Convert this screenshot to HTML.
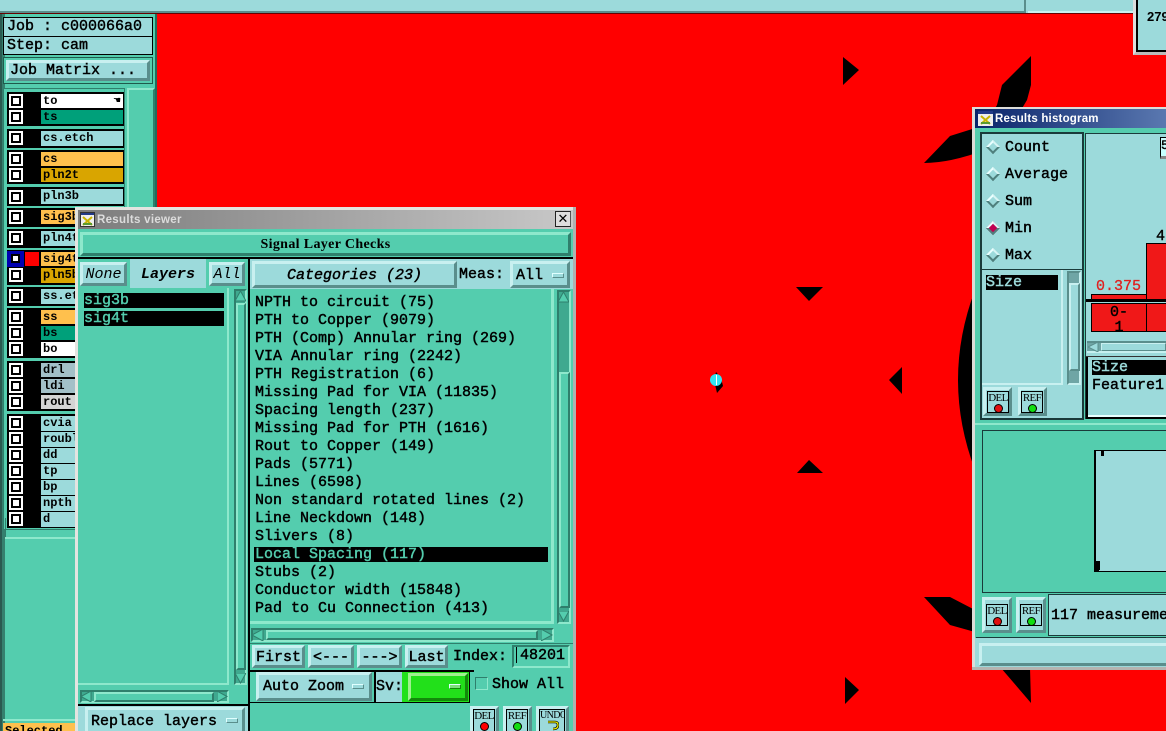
<!DOCTYPE html>
<html><head><meta charset="utf-8"><style>
html,body{margin:0;padding:0;width:1166px;height:731px;overflow:hidden;background:#f00}
#r{position:relative;width:1166px;height:731px;overflow:hidden;font:15px/18px "Liberation Mono",monospace;-webkit-text-stroke:.45px #000;color:#000}
#r div{position:absolute;box-sizing:border-box;white-space:pre}
.l{background:#9cdadb}.g{background:#54cdae}.k{background:#000}
.b{background:#9cdadb;border:3px solid;border-color:#c8f0f0 #5a8e8c #5a8e8c #c8f0f0}
.bg{background:#54cdae;border:3px solid;border-color:#8ee8cc #2f7f6c #2f7f6c #8ee8cc}
.s{background:#3fa98f;border:2px solid;border-color:#2f7f6c #8ee8cc #8ee8cc #2f7f6c}
.th{background:#54cdae;border:2px solid;border-color:#8ee8cc #2f7f6c #2f7f6c #8ee8cc}
.r{font-size:12px;font-weight:bold;-webkit-text-stroke:0;line-height:15px;padding-left:2px;overflow:hidden}
.c{width:14px;height:14px;background:#fff;left:9px}
.c:after{content:"";position:absolute;left:2px;top:2px;width:10px;height:10px;box-sizing:border-box;border:2px solid #000;background:#fff}
.d{width:10px;height:10px;transform:rotate(45deg);background:#9cdadb;border:2px solid;border-color:#d8f4f4 #4f7f7d #4f7f7d #eaffff;left:988px}
.i{background:#9cdadb;border:1px solid #000;font:11px/12px "Liberation Serif",serif;-webkit-text-stroke:0;text-align:center;letter-spacing:-.6px;overflow:hidden}
.i span{display:block;width:9px;height:9px;border-radius:50%;margin:0 auto;border:1px solid #000;box-sizing:border-box}
.n{-webkit-text-stroke:0}
.w{color:#54cdae;-webkit-text-stroke:.45px #54cdae}
.x{color:#9cdadb;-webkit-text-stroke:.45px #9cdadb}
</style></head><body><div id="r">

<!-- top strip -->
<div class="l" style="left:0;top:0;width:1166px;height:14px"></div>
<div style="left:0;top:11px;width:1026px;height:2px;background:#5a8e8c"></div>
<div style="left:1024px;top:0;width:2px;height:13px;background:#5a8e8c"></div>
<div style="left:1028px;top:11px;width:110px;height:2px;background:#c8f0f0"></div>
<div style="left:0;top:13px;width:1166px;height:1px;background:#600"></div>
<div class="l" style="left:1133px;top:0;width:33px;height:55px;border-left:3px solid #ddd;border-bottom:3px solid #bbb"></div>
<div class="k" style="left:1136px;top:0;width:30px;height:52px"></div>
<div class="l" style="left:1138px;top:0;width:28px;height:50px"></div>
<div class="n" style="left:1147px;top:8px;font:bold 13px/18px 'Liberation Sans',sans-serif">279</div>

<!-- black artwork -->
<svg style="position:absolute;left:0;top:0" width="1166" height="731" viewBox="0 0 1166 731">
<path d="M843 57L859 70L843 85ZM845 677L859 690L845 704ZM796 287H823L809 301ZM889 380L902 367V394ZM797 473L809 460L823 473Z" fill="#000"/>
<path d="M1031 56L1002 85L997 105L985 125L950 136L924 163Q950 163 985 150L1015 120L1027 100L1031 85Z" fill="#000"/>
<path d="M975 290Q941 380 975 470Z" fill="#000"/>
<path d="M924 597L950 597L975 610V632L950 625ZM1001 668L1030 668L1031 703Z" fill="#000"/>
<path d="M716 372L721 378L723 386L717 393L714 380Z" fill="#000"/>
<circle cx="716" cy="380" r="6" fill="#2fe6f0"/>
<rect x="716" y="375" width="1" height="10" fill="#fff"/>
</svg>

<!-- left panel -->
<div class="g" style="left:0;top:14px;width:157px;height:717px"></div>
<div style="left:0;top:14px;width:2px;height:717px;background:#2a5a50"></div>
<div style="left:2px;top:14px;width:3px;height:717px;background:#35806e"></div>
<div style="left:155px;top:14px;width:2px;height:717px;background:#1f6e5c"></div>
<div class="l" style="left:3px;top:17px;width:150px;height:20px;border:1px solid #000;padding:0 0 0 3px">Job : c000066a0</div>
<div class="l" style="left:3px;top:36px;width:150px;height:19px;border:1px solid #000;padding:0 0 0 3px;line-height:17px">Step: cam</div>
<div class="g" style="left:3px;top:57px;width:150px;height:27px;border:1px solid #1f5a4c"></div>
<div class="b" style="left:6px;top:60px;width:144px;height:21px;padding:0 0 0 1px;line-height:16px;background:#9cdadb">Job Matrix ...</div>
<div style="left:3px;top:88px;width:122px;height:442px;background:#54cdae;border:1px solid #2f7f6c"></div>
<div class="g" style="left:127px;top:88px;width:28px;height:449px;border-left:2px solid #8ee8cc;border-top:2px solid #8ee8cc;border-right:2px solid #2f7f6c"></div>
<div style="left:5px;top:537px;width:150px;height:2px;background:#8ee8cc"></div>
<div style="left:5px;top:518px;width:1px;height:19px;background:#2f7f6c"></div>

<!-- layer groups -->
<div class="k" style="left:7px;top:92px;width:117px;height:34px"></div>
<div class="k" style="left:7px;top:129px;width:117px;height:19px"></div>
<div class="k" style="left:7px;top:150px;width:117px;height:34px"></div>
<div class="k" style="left:7px;top:187px;width:117px;height:19px"></div>
<div class="k" style="left:7px;top:208px;width:117px;height:19px"></div>
<div class="k" style="left:7px;top:229px;width:117px;height:19px"></div>
<div class="k" style="left:7px;top:250px;width:117px;height:35px"></div>
<div class="k" style="left:7px;top:287px;width:117px;height:19px"></div>
<div class="k" style="left:7px;top:308px;width:117px;height:50px"></div>
<div class="k" style="left:7px;top:361px;width:117px;height:50px"></div>
<div class="k" style="left:7px;top:414px;width:117px;height:114px"></div>

<div class="c" style="top:94px"></div><div class="r" style="left:41px;top:94px;width:82px;height:14px;background:#fff">to</div>
<div class="n" style="left:113px;top:97px;font:9px/9px 'DejaVu Sans',sans-serif">&#9754;</div>
<div class="c" style="top:110px"></div><div class="r" style="left:41px;top:110px;width:82px;height:14px;background:#00a07a">ts</div>
<div class="c" style="top:131px"></div><div class="r l" style="left:41px;top:131px;width:82px;height:15px">cs.etch</div>
<div class="c" style="top:152px"></div><div class="r" style="left:41px;top:152px;width:82px;height:14px;background:#ffc04d">cs</div>
<div class="c" style="top:168px"></div><div class="r" style="left:41px;top:168px;width:82px;height:14px;background:#d9a500">pln2t</div>
<div class="c" style="top:190px"></div><div class="r l" style="left:41px;top:189px;width:82px;height:15px">pln3b</div>
<div class="c" style="top:210px"></div><div class="r" style="left:41px;top:210px;width:82px;height:14px;background:#ffc04d">sig3b</div>
<div class="c" style="top:231px"></div><div class="r l" style="left:41px;top:231px;width:82px;height:15px">pln4t</div>
<div style="left:7px;top:251px;width:17px;height:16px;background:#0000b0"></div>
<div style="left:11px;top:254px;width:9px;height:9px;background:#fff;border:2px solid #000"></div>
<div style="left:25px;top:252px;width:14px;height:14px;background:#f00"></div>
<div class="r" style="left:41px;top:252px;width:82px;height:14px;background:#ffc04d">sig4t</div>
<div class="c" style="top:268px"></div><div class="r" style="left:41px;top:268px;width:82px;height:15px;background:#d9a500">pln5b</div>
<div class="c" style="top:289px"></div><div class="r l" style="left:41px;top:289px;width:82px;height:15px">ss.etch</div>
<div class="c" style="top:310px"></div><div class="r" style="left:41px;top:310px;width:82px;height:14px;background:#ffc04d">ss</div>
<div class="c" style="top:326px"></div><div class="r" style="left:41px;top:326px;width:82px;height:14px;background:#00a07a">bs</div>
<div class="c" style="top:342px"></div><div class="r" style="left:41px;top:342px;width:82px;height:14px;background:#fff">bo</div>
<div class="c" style="top:363px"></div><div class="r" style="left:41px;top:363px;width:82px;height:14px;background:#a3c0c8">drl</div>
<div class="c" style="top:379px"></div><div class="r" style="left:41px;top:379px;width:82px;height:14px;background:#a3c0c8">ldi</div>
<div class="c" style="top:395px"></div><div class="r" style="left:41px;top:395px;width:82px;height:14px;background:#d4d4d4">rout</div>
<div class="c" style="top:416px"></div><div class="r l" style="left:41px;top:416px;width:82px;height:15px">cvia</div>
<div class="c" style="top:432px"></div><div class="r l" style="left:41px;top:432px;width:82px;height:15px">roubl</div>
<div class="c" style="top:448px"></div><div class="r l" style="left:41px;top:448px;width:82px;height:15px">dd</div>
<div class="c" style="top:464px"></div><div class="r l" style="left:41px;top:464px;width:82px;height:15px">tp</div>
<div class="c" style="top:480px"></div><div class="r l" style="left:41px;top:480px;width:82px;height:15px">bp</div>
<div class="c" style="top:496px"></div><div class="r l" style="left:41px;top:496px;width:82px;height:15px">npth</div>
<div class="c" style="top:512px"></div><div class="r l" style="left:41px;top:512px;width:82px;height:15px">d</div>

<div style="left:3px;top:719px;width:72px;height:2px;background:#8ee8cc"></div>
<div class="r" style="left:3px;top:723px;width:72px;height:8px;background:#ffc04d;padding-top:1px">Selected</div>

<!-- Results viewer -->
<div style="left:75px;top:207px;width:501px;height:524px;background:#3a7a6a;border:3px solid;border-color:#e4e4e0 #b0b0b0 #b0b0b0 #e4e4e0;border-bottom:0"></div>
<div style="left:78px;top:210px;width:495px;height:19px;background:linear-gradient(90deg,#7c7c7c,#c8c8c8)"></div>
<svg style="position:absolute;left:80px;top:212px" width="15" height="15" viewBox="0 0 15 15"><rect width="15" height="15" fill="#eee"/><rect width="15" height="3" fill="#223a88"/><rect x=".5" y=".5" width="14" height="14" fill="none" stroke="#333"/><path d="M3 5L12 13M12 5L3 13" stroke="#c8b400" stroke-width="2"/><path d="M3 11h9v2H3z" fill="#5a9a30"/></svg>
<div class="n" style="left:97px;top:212px;font:bold 11.5px/17px 'Liberation Sans',sans-serif;color:#dcdcdc;letter-spacing:.3px">Results viewer</div>
<div class="n" style="left:555px;top:211px;width:16px;height:16px;background:#ddd;border:1px solid #222;border-right-color:#555;font:13px/14px 'Liberation Sans',sans-serif;text-align:center">&#10005;</div>

<div class="g" style="left:78px;top:229px;width:495px;height:502px"></div>
<div class="bg n" style="left:80px;top:232px;width:491px;height:24px;font:bold 14px/20px 'Liberation Serif',serif;letter-spacing:.35px;text-align:center;padding-right:0">Signal Layer Checks</div>
<div class="k" style="left:78px;top:257px;width:495px;height:2px"></div>
<div style="left:248px;top:259px;width:2px;height:472px;background:#000"></div>
<div class="l" style="left:78px;top:259px;width:170px;height:29px"></div>
<div class="g" style="left:78px;top:259px;width:52px;height:29px"></div>
<div class="g" style="left:206px;top:259px;width:42px;height:29px"></div>
<div class="b n" style="left:80px;top:262px;width:47px;height:24px;font:italic 15px/19px 'Liberation Mono',monospace;text-align:center">None</div>
<div style="left:130px;top:266px;width:76px;text-align:center;font-style:italic;font-weight:bold;-webkit-text-stroke:0">Layers</div>
<div class="b n" style="left:209px;top:262px;width:36px;height:24px;font:italic 15px/19px 'Liberation Mono',monospace;text-align:center">All</div>
<div class="l" style="left:250px;top:259px;width:323px;height:30px"></div>
<div class="b" style="left:252px;top:261px;width:205px;height:27px;font-style:italic;text-align:center;line-height:23px">Categories (23)</div>
<div style="left:459px;top:266px">Meas:</div>
<div class="b" style="left:510px;top:261px;width:60px;height:27px;line-height:23px;padding-left:3px">All</div>
<div style="left:552px;top:273px;width:12px;height:5px;background:#9cdadb;border:1px solid;border-color:#e0ffff #5a8e8c #5a8e8c #e0ffff"></div>

<!-- layers list -->
<div style="left:78px;top:288px;width:151px;height:397px;border-right:2px solid #8ee8cc;border-bottom:2px solid #8ee8cc"></div>
<div class="k w" style="left:84px;top:293px;width:140px;height:15px;line-height:16px">sig3b</div>
<div class="k w" style="left:84px;top:311px;width:140px;height:15px;line-height:16px">sig4t</div>
<div class="s" style="left:234px;top:289px;width:13px;height:396px"></div>
<div class="th" style="left:236px;top:303px;width:10px;height:367px"></div>
<svg style="position:absolute;left:235px;top:291px" width="11" height="11"><path d="M5.5 0L11 10H0Z" fill="#54cdae" stroke="#2f7f6c"/></svg>
<svg style="position:absolute;left:235px;top:673px" width="11" height="11"><path d="M5.5 10L11 0H0Z" fill="#54cdae" stroke="#2f7f6c"/></svg>
<div class="s" style="left:80px;top:690px;width:149px;height:13px"></div>
<div class="th" style="left:94px;top:692px;width:120px;height:10px"></div>
<svg style="position:absolute;left:81px;top:691px" width="11" height="11"><path d="M0 5.5L10 0V11Z" fill="#54cdae" stroke="#2f7f6c"/></svg>
<svg style="position:absolute;left:217px;top:691px" width="11" height="11"><path d="M10 5.5L0 0V11Z" fill="#54cdae" stroke="#2f7f6c"/></svg>
<div class="k" style="left:78px;top:704px;width:172px;height:2px"></div>
<div class="l" style="left:78px;top:706px;width:170px;height:25px"></div>
<div class="b" style="left:85px;top:707px;width:160px;height:30px;padding-left:3px;line-height:23px">Replace layers</div>
<div style="left:226px;top:718px;width:12px;height:5px;background:#9cdadb;border:1px solid;border-color:#e0ffff #5a8e8c #5a8e8c #e0ffff"></div>

<!-- categories -->
<div style="left:250px;top:289px;width:304px;height:335px;border-right:3px solid #8ee8cc;border-bottom:3px solid #8ee8cc"></div>
<div style="left:255px;top:294px;width:295px;line-height:18px">NPTH to circuit (75)
PTH to Copper (9079)
PTH (Comp) Annular ring (269)
VIA Annular ring (2242)
PTH Registration (6)
Missing Pad for VIA (11835)
Spacing length (237)
Missing Pad for PTH (1616)
Rout to Copper (149)
Pads (5771)
Lines (6598)
Non standard rotated lines (2)
Line Neckdown (148)
Slivers (8)</div>
<div class="k" style="left:254px;top:547px;width:294px;height:15px"></div>
<div class="w" style="left:255px;top:546px">Local Spacing (117)</div>
<div style="left:255px;top:564px;line-height:18px">Stubs (2)
Conductor width (15848)
Pad to Cu Connection (413)</div>
<div class="s" style="left:557px;top:290px;width:14px;height:334px"></div>
<div class="th" style="left:559px;top:372px;width:11px;height:236px"></div>
<svg style="position:absolute;left:558px;top:292px" width="11" height="11"><path d="M5.5 0L11 10H0Z" fill="#54cdae" stroke="#2f7f6c"/></svg>
<svg style="position:absolute;left:558px;top:611px" width="11" height="11"><path d="M5.5 10L11 0H0Z" fill="#54cdae" stroke="#2f7f6c"/></svg>
<div class="s" style="left:251px;top:628px;width:303px;height:14px"></div>
<div class="th" style="left:266px;top:630px;width:272px;height:10px"></div>
<svg style="position:absolute;left:252px;top:629px" width="12" height="12"><path d="M0 6L11 0V12Z" fill="#54cdae" stroke="#2f7f6c"/></svg>
<svg style="position:absolute;left:541px;top:629px" width="12" height="12"><path d="M11 6L0 0V12Z" fill="#54cdae" stroke="#2f7f6c"/></svg>
<div class="k" style="left:250px;top:643px;width:323px;height:1px;background:#2f7f6c"></div>

<div class="b" style="left:252px;top:645px;width:53px;height:23px;text-align:center;line-height:19px">First</div>
<div class="b" style="left:308px;top:645px;width:46px;height:23px;text-align:center;line-height:19px">&lt;---</div>
<div class="b" style="left:357px;top:645px;width:45px;height:23px;text-align:center;line-height:19px">---&gt;</div>
<div class="b" style="left:405px;top:645px;width:43px;height:23px;text-align:center;line-height:19px">Last</div>
<div style="left:453px;top:648px">Index:</div>
<div style="left:512px;top:645px;width:58px;height:23px;border:2px solid;border-color:#2f7f6c #8ee8cc #8ee8cc #2f7f6c;padding-left:6px;line-height:18px">48201</div>
<div style="left:516px;top:647px;width:1px;height:16px;background:#000"></div>
<div class="k" style="left:250px;top:670px;width:224px;height:2px"></div>
<div class="k" style="left:250px;top:702px;width:220px;height:1px"></div>
<div class="b" style="left:256px;top:672px;width:116px;height:29px;padding-left:4px;line-height:24px">Auto Zoom</div>
<div style="left:352px;top:684px;width:12px;height:5px;background:#9cdadb;border:1px solid;border-color:#e0ffff #5a8e8c #5a8e8c #e0ffff"></div>
<div class="k" style="left:374px;top:671px;width:2px;height:32px"></div>
<div class="l" style="left:376px;top:672px;width:26px;height:30px;padding-top:6px">Sv:</div>
<div style="left:402px;top:672px;width:68px;height:30px;background:#22e01a;border-right:1px solid #000"></div>
<div style="left:408px;top:673px;width:60px;height:28px;background:#22e01a;border:3px solid;border-color:#a0f090 #128a0a #128a0a #a0f090"></div>
<div style="left:449px;top:684px;width:12px;height:5px;background:#7ce07c;border:1px solid;border-color:#e0ffff #128a0a #128a0a #e0ffff"></div>
<div style="left:475px;top:677px;width:13px;height:13px;background:#54cdae;border:1px solid;border-color:#2f7f6c #8ee8cc #8ee8cc #2f7f6c"></div>
<div style="left:492px;top:676px">Show All</div>

<div class="b" style="left:470px;top:706px;width:29px;height:30px"></div>
<div class="i" style="left:473px;top:709px;width:22px;height:24px">DEL<span style="background:#f00"></span></div>
<div class="b" style="left:503px;top:706px;width:29px;height:30px"></div>
<div class="i" style="left:506px;top:709px;width:22px;height:24px">REF<span style="background:#1d1"></span></div>
<div class="b" style="left:536px;top:706px;width:33px;height:30px"></div>
<div class="i" style="left:539px;top:709px;width:26px;height:24px;font-size:10px;letter-spacing:-.6px">UNDO</div>
<svg style="position:absolute;left:547px;top:720px" width="12" height="11" viewBox="0 0 12 11"><path d="M1 2H8Q11 2 11 5Q11 9 6 9" fill="none" stroke="#000" stroke-width="2.6"/><path d="M1 2H8Q11 2 11 5Q11 9 6 9" fill="none" stroke="#ee0" stroke-width="1.2"/></svg>

<div style="left:573px;top:207px;width:3px;height:524px;background:#b0b0b0"></div>

<!-- Results histogram -->
<div style="left:972px;top:107px;width:194px;height:563px;background:#54cdae;border:3px solid #dcdcd8;border-right:0;border-bottom-color:#aaa"></div>
<div style="left:975px;top:109px;width:191px;height:19px;background:linear-gradient(90deg,#0a246a,#5a78b0)"></div>
<svg style="position:absolute;left:978px;top:111px" width="15" height="15" viewBox="0 0 15 15"><rect width="15" height="15" fill="#eee"/><rect width="15" height="3" fill="#223a88"/><path d="M3 5L12 13M12 5L3 13" stroke="#c8b400" stroke-width="2"/><path d="M3 11h9v2H3z" fill="#5a9a30"/></svg>
<div class="n" style="left:995px;top:111px;font:bold 11.5px/17px 'Liberation Sans',sans-serif;color:#fff;letter-spacing:.2px">Results histogram</div>

<div class="l" style="left:980px;top:132px;width:104px;height:288px;border:2px solid #1a3a3a"></div>
<div class="d" style="top:142px"></div><div style="left:1005px;top:139px">Count</div>
<div class="d" style="top:169px"></div><div style="left:1005px;top:166px">Average</div>
<div class="d" style="top:196px"></div><div style="left:1005px;top:193px">Sum</div>
<div class="d" style="top:223px;background:#c00050"></div><div style="left:1005px;top:220px">Min</div>
<div class="d" style="top:250px"></div><div style="left:1005px;top:247px">Max</div>
<div class="k" style="left:982px;top:269px;width:100px;height:1px;background:#1a3a3a"></div>
<div style="left:982px;top:270px;width:81px;height:115px;border-right:2px solid #c8f0f0;border-bottom:2px solid #c8f0f0"></div>
<div class="k x" style="left:986px;top:275px;width:72px;height:15px;line-height:16px">Size</div>
<div style="left:1067px;top:271px;width:14px;height:114px;background:#6fa5a5;border:2px solid;border-color:#5a8e8c #c8f0f0 #c8f0f0 #5a8e8c"></div>
<div class="b" style="left:1069px;top:283px;width:11px;height:88px;border-width:2px"></div>
<div class="b" style="left:983px;top:387px;width:29px;height:29px"></div>
<div class="i" style="left:987px;top:391px;width:22px;height:22px">DEL<span style="background:#e01010"></span></div>
<div class="b" style="left:1018px;top:387px;width:29px;height:29px"></div>
<div class="i" style="left:1021px;top:391px;width:22px;height:22px">REF<span style="background:#1d1"></span></div>

<div class="l" style="left:1085px;top:133px;width:81px;height:286px;border:1px solid #1a3a3a;border-right:0"></div>
<div style="left:1160px;top:137px;width:6px;height:22px;background:#c8ffff;border:1px solid #000;border-right:0;border-bottom:3px solid #888;font-size:13px;line-height:16px">5</div>
<div style="left:1156px;top:228px">4</div>
<div style="left:1096px;top:278px;color:#e02020;-webkit-text-stroke:.3px #e02020">0.375</div>
<div style="left:1091px;top:294px;width:56px;height:5px;background:#f01818;border:1px solid #000;border-bottom:0"></div>
<div style="left:1146px;top:243px;width:20px;height:56px;background:#f01818;border:1px solid #000;border-right:0;border-bottom:0"></div>
<div class="k" style="left:1086px;top:299px;width:80px;height:3px"></div>
<div style="left:1091px;top:303px;width:56px;height:29px;background:#f01818;border:1px solid #000;text-align:center;line-height:15px;padding-top:1px">0-
1</div>
<div style="left:1146px;top:303px;width:20px;height:29px;background:#f01818;border:1px solid #000;border-right:0"></div>
<div style="left:1087px;top:341px;width:79px;height:12px;background:#6fa5a5;border-top:2px solid #5a8e8c;border-bottom:2px solid #c8f0f0"></div>
<div class="b" style="left:1101px;top:343px;width:65px;height:8px;border-width:1px"></div>
<svg style="position:absolute;left:1088px;top:342px" width="11" height="10"><path d="M0 5L10 0V10Z" fill="#9cdadb" stroke="#5a8e8c"/></svg>
<div class="k" style="left:1086px;top:356px;width:80px;height:1px;background:#333"></div>
<div class="k" style="left:1086px;top:357px;width:2px;height:60px"></div>
<div class="k x" style="left:1092px;top:360px;width:74px;height:15px;line-height:16px">Size</div>
<div style="left:1092px;top:377px">Feature1</div>
<div style="left:1088px;top:415px;width:78px;height:2px;background:#e8ffff"></div>
<div class="k" style="left:1086px;top:417px;width:80px;height:2px"></div>

<div style="left:975px;top:423px;width:191px;height:2px;background:#8ee8cc"></div>
<div class="g" style="left:982px;top:430px;width:184px;height:163px;border:1px solid #1a3a3a;border-right:0"></div>
<div class="k" style="left:1094px;top:450px;width:72px;height:122px"></div>
<div class="l" style="left:1099px;top:451px;width:67px;height:120px"></div>
<div class="k" style="left:1094px;top:450px;width:2px;height:122px"></div>
<div class="l" style="left:1096px;top:451px;width:3px;height:113px"></div>
<div class="k" style="left:1101px;top:451px;width:3px;height:5px"></div>
<div class="k" style="left:1095px;top:561px;width:5px;height:9px"></div>

<div class="b" style="left:982px;top:597px;width:30px;height:36px"></div>
<div class="i" style="left:986px;top:604px;width:22px;height:22px">DEL<span style="background:#e01010"></span></div>
<div class="b" style="left:1016px;top:597px;width:30px;height:36px"></div>
<div class="i" style="left:1020px;top:604px;width:22px;height:22px">REF<span style="background:#1d1"></span></div>
<div class="l" style="left:1048px;top:594px;width:118px;height:42px;border:1px solid #1a3a3a;border-right:0;padding:12px 0 0 2px">117 measureme</div>
<div class="k" style="left:976px;top:637px;width:190px;height:1px;background:#1a3a3a"></div>
<div class="l" style="left:975px;top:638px;width:191px;height:29px"></div>
<div class="b" style="left:979px;top:643px;width:187px;height:23px;border-right:0"></div>
<div style="left:972px;top:667px;width:194px;height:3px;background:#b4b4b0"></div>
</div></body></html>
